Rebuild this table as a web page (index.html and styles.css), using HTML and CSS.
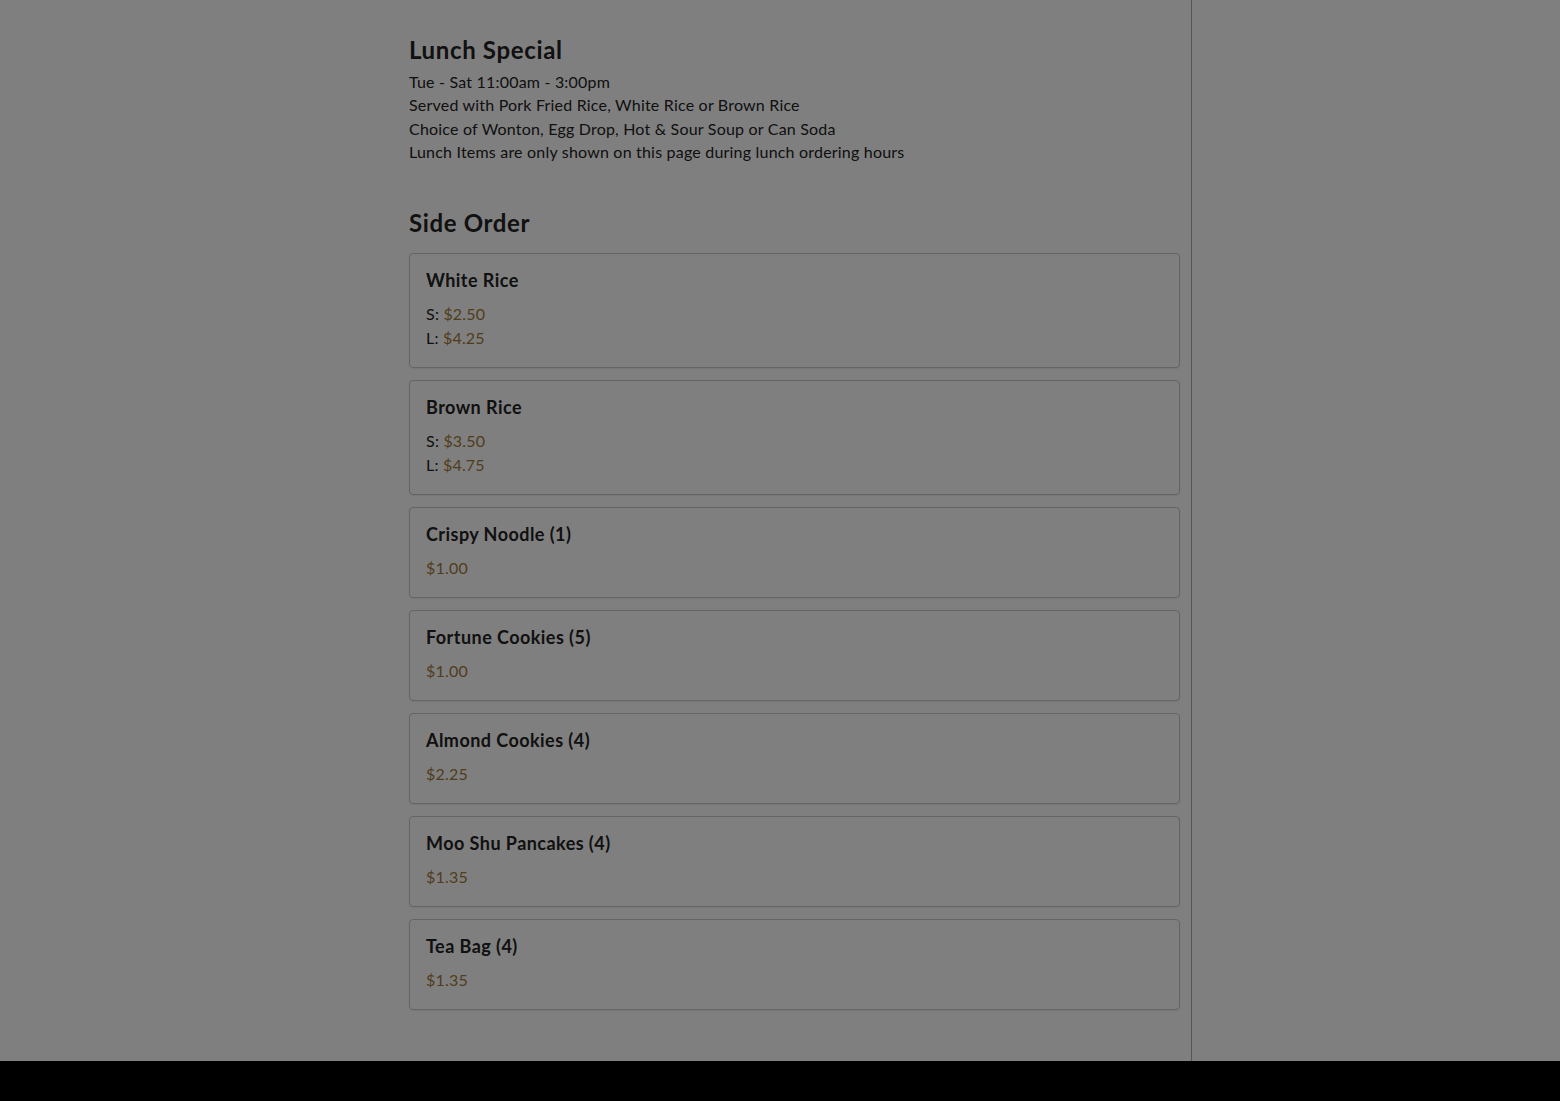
FILE: index.html
```html
<!DOCTYPE html>
<html lang="en">
<head>
<meta charset="utf-8">
<title>Menu</title>
<link rel="stylesheet" href="styles.css">
</head>
<body>
<div class="page">
  <main class="menu">
    <section class="category">
      <h2 class="cat-title">Lunch Special</h2>
      <div class="cat-notes">
        <p>Tue - Sat 11:00am - 3:00pm</p>
        <p>Served with Pork Fried Rice, White Rice or Brown Rice</p>
        <p>Choice of Wonton, Egg Drop, Hot &amp; Sour Soup or Can Soda</p>
        <p>Lunch Items are only shown on this page during lunch ordering hours</p>
      </div>
    </section>
    <section class="category">
      <h2 class="cat-title">Side Order</h2>
      <div class="items">
        <div class="item">
          <h3 class="item-name">White Rice</h3>
          <div class="prices">
            <div>S: <span class="price">$2.50</span></div>
            <div>L: <span class="price">$4.25</span></div>
          </div>
        </div>
        <div class="item">
          <h3 class="item-name">Brown Rice</h3>
          <div class="prices">
            <div>S: <span class="price">$3.50</span></div>
            <div>L: <span class="price">$4.75</span></div>
          </div>
        </div>
        <div class="item">
          <h3 class="item-name">Crispy Noodle (1)</h3>
          <div class="prices"><div><span class="price">$1.00</span></div></div>
        </div>
        <div class="item">
          <h3 class="item-name">Fortune Cookies (5)</h3>
          <div class="prices"><div><span class="price">$1.00</span></div></div>
        </div>
        <div class="item">
          <h3 class="item-name">Almond Cookies (4)</h3>
          <div class="prices"><div><span class="price">$2.25</span></div></div>
        </div>
        <div class="item">
          <h3 class="item-name">Moo Shu Pancakes (4)</h3>
          <div class="prices"><div><span class="price">$1.35</span></div></div>
        </div>
        <div class="item">
          <h3 class="item-name">Tea Bag (4)</h3>
          <div class="prices"><div><span class="price">$1.35</span></div></div>
        </div>
      </div>
    </section>
  </main>
</div>
<div class="overlay"></div>
</body>
</html>
```
FILE: styles.css
```css
html {
  background: #000;
}
body {
  margin: 0;
  background: #fff;
  font-family: Lato, "Open Sans", sans-serif;
  color: #222;
}
.page {
  display: flex;
  padding-left: 393px;
  height: 1061px;
  box-sizing: border-box;
}
.menu {
  width: 799px;
  box-sizing: border-box;
  padding: 34px 11px 0 16px;
  border-right: 1px solid #aaa;
}
.category {
  margin-bottom: 44px;
}
.cat-title {
  margin: 0 0 4px;
  font-size: 24px;
  line-height: 32px;
  font-weight: 700;
  letter-spacing: 0.65px;
}
.cat-notes p {
  margin: 0;
  font-size: 16px;
  line-height: 23.3px;
  letter-spacing: 0.2px;
}
.items {
  display: flex;
  flex-direction: column;
  gap: 12px;
  margin-top: 14px;
}
.item {
  border: 1px solid #c8c8c8;
  border-radius: 4px;
  padding: 16px 16px 17px;
  box-shadow: 0 1px 2px rgba(0, 0, 0, 0.08);
}
.item-name {
  margin: 0 0 12px;
  font-size: 18px;
  line-height: 20px;
  font-weight: 700;
  letter-spacing: 0.45px;
}
.prices {
  font-size: 16px;
  line-height: 24px;
  letter-spacing: 0.2px;
}
.price {
  color: #a27a38;
}
.overlay {
  position: fixed;
  inset: 0;
  background: rgba(0, 0, 0, 0.5);
}
```
